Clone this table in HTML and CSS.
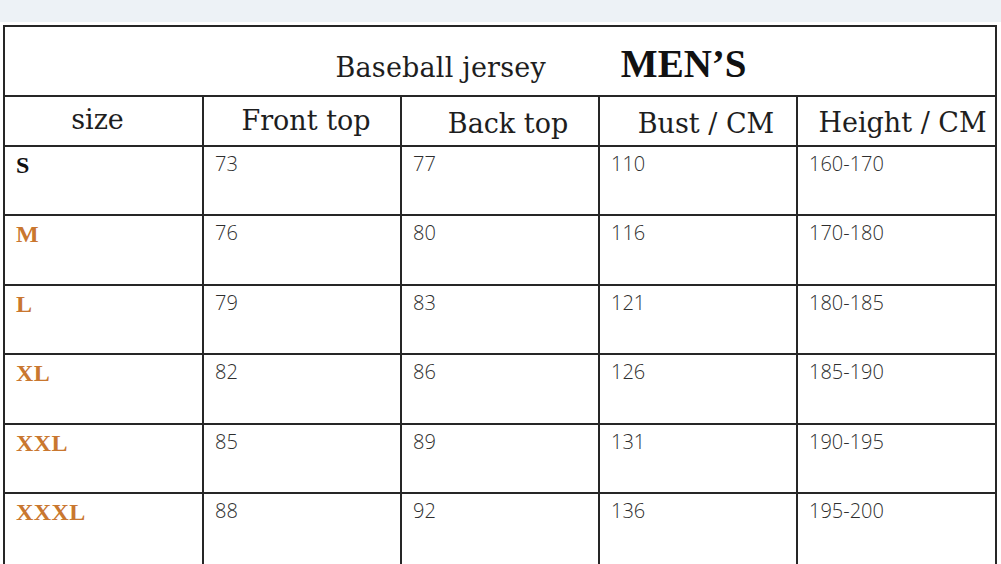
FILE: index.html
```html
<!DOCTYPE html>
<html lang="en">
<head>
<meta charset="utf-8">
<title>Baseball jersey size chart</title>
<link rel="stylesheet" href="styles.css">
</head>
<body>
<div class="band"></div>
<table class="chart">
  <colgroup>
    <col class="c1"><col class="c2"><col class="c3"><col class="c4"><col class="c5">
  </colgroup>
  <tr class="title-row">
    <td colspan="5">
      <div class="title">
        <span class="t1">Baseball jersey</span>
        <span class="t2">MEN’S</span>
      </div>
    </td>
  </tr>
  <tr class="head-row">
    <th class="h-size">size</th>
    <th class="h-front">Front top</th>
    <th class="h-back">Back top</th>
    <th class="h-bust">Bust / CM</th>
    <th class="h-height">Height / CM</th>
  </tr>
  <tr class="data-row">
    <td class="sz dark">S</td><td>73</td><td>77</td><td>110</td><td>160-170</td>
  </tr>
  <tr class="data-row alt">
    <td class="sz">M</td><td>76</td><td>80</td><td>116</td><td>170-180</td>
  </tr>
  <tr class="data-row">
    <td class="sz">L</td><td>79</td><td>83</td><td>121</td><td>180-185</td>
  </tr>
  <tr class="data-row alt">
    <td class="sz">XL</td><td>82</td><td>86</td><td>126</td><td>185-190</td>
  </tr>
  <tr class="data-row">
    <td class="sz">XXL</td><td>85</td><td>89</td><td>131</td><td>190-195</td>
  </tr>
  <tr class="data-row last">
    <td class="sz">XXXL</td><td>88</td><td>92</td><td>136</td><td>195-200</td>
  </tr>
</table>
</body>
</html>
```
FILE: styles.css
```css
html, body {
  margin: 0;
  padding: 0;
  overflow: hidden;
  background: #ffffff;
}

.band {
  height: 22px;
  background: #edf2f6;
  margin-bottom: 3px;
}

.chart {
  margin-left: 3px;
  width: 994px;
  border-collapse: collapse;
  table-layout: fixed;
}

.c1 { width: 199px; }
.c2 { width: 198px; }
.c3 { width: 198px; }
.c4 { width: 198px; }
.c5 { width: 199px; }

.chart td,
.chart th {
  border: 2px solid #262626;
  padding: 0;
}

.title-row { height: 70px; }

.title {
  display: flex;
  align-items: baseline;
  justify-content: center;
  padding-left: 82px;
  padding-top: 4px;
  gap: 75px;
}

.t1 {
  font-family: "DejaVu Serif", serif;
  font-size: 27px;
  color: #1e1e1e;
  letter-spacing: 0.2px;
}

.t2 {
  font-family: "Liberation Serif", serif;
  font-weight: bold;
  font-size: 39px;
  color: #111111;
}

.head-row { height: 50px; }

.head-row th {
  font-family: "DejaVu Serif", serif;
  font-weight: normal;
  font-size: 27px;
  color: #1e1e1e;
  text-align: center;
  vertical-align: middle;
}

.h-size { padding-right: 12px !important; padding-bottom: 4px !important; }
.h-front { padding-left: 8px !important; padding-bottom: 2px !important; }
.h-back { padding-left: 16px !important; padding-top: 4px !important; }
.h-bust { padding-left: 16px !important; padding-top: 4px !important; }
.h-height { padding-left: 12px !important; padding-top: 2px !important; }

.data-row { height: 69px; }
.data-row.alt { height: 70px; }
.data-row.last { height: 90px; }

.data-row td {
  vertical-align: top;
  font-family: "Open Sans", sans-serif;
  font-weight: 300;
  font-size: 20px;
  color: #2e2e2e;
  padding: 3px 0 0 11px;
}

.data-row td.sz {
  font-family: "Liberation Serif", serif;
  font-weight: bold;
  font-size: 24px;
  letter-spacing: 0.4px;
  color: #c9772f;
  padding: 5px 0 0 11px;
}

.data-row td.sz.dark {
  color: #111111;
}
```
